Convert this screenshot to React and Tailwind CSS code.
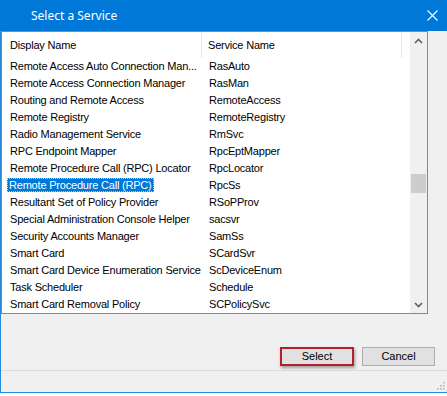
import React from 'react';

const rows = [
  ['Remote Access Auto Connection Man...', 'RasAuto'],
  ['Remote Access Connection Manager', 'RasMan'],
  ['Routing and Remote Access', 'RemoteAccess'],
  ['Remote Registry', 'RemoteRegistry'],
  ['Radio Management Service', 'RmSvc'],
  ['RPC Endpoint Mapper', 'RpcEptMapper'],
  ['Remote Procedure Call (RPC) Locator', 'RpcLocator'],
  ['Remote Procedure Call (RPC)', 'RpcSs'],
  ['Resultant Set of Policy Provider', 'RSoPProv'],
  ['Special Administration Console Helper', 'sacsvr'],
  ['Security Accounts Manager', 'SamSs'],
  ['Smart Card', 'SCardSvr'],
  ['Smart Card Device Enumeration Service', 'ScDeviceEnum'],
  ['Task Scheduler', 'Schedule'],
  ['Smart Card Removal Policy', 'SCPolicySvc'],
];

const SELECTED = 7;

function Chevron({ down }) {
  return (
    <svg width="9" height="6" viewBox="0 0 9 6" className="text-[#606060]">
      <path d={down ? 'M1 1 L4.5 4.5 L8 1' : 'M1 5 L4.5 1.5 L8 5'} fill="none" stroke="currentColor" strokeWidth="1.6" />
    </svg>
  );
}

export default function App() {
  return (
    <div className="w-[447px] h-[396px] bg-white overflow-hidden" style={{ fontFamily: '"Liberation Sans", Arial, sans-serif' }}>
      <div className="w-[447px] h-[393px] bg-[#f0f0f0] border-l border-b border-[#2b8ad8] flex flex-col">
        {/* Title bar */}
        <div className="h-[31px] bg-[#0078d7] flex items-center justify-between text-white shrink-0 -ml-px">
          <span className="pl-[31px] text-[12px]" style={{ fontFamily: '"Noto Sans", "Open Sans", sans-serif' }}>Select a Service</span>
          <svg width="11" height="11" viewBox="0 0 11 11" className="mr-[9px]">
            <path d="M0.5 0.5 L10.5 10.5 M10.5 0.5 L0.5 10.5" stroke="white" strokeWidth="1.1" />
          </svg>
        </div>

        {/* List view */}
        <div className="w-[427px] h-[283px] border border-[#828790] bg-white flex text-[11px] tracking-[-0.2px] text-black shrink-0">
          <div className="flex-1 flex flex-col">
            <div className="h-[26px] flex items-center">
              <div className="w-[200px] h-full pl-[8px] flex items-center border-r border-[#e5e5e5]">Display Name</div>
              <div className="w-[200px] h-full pl-[6px] flex items-center border-r border-[#e5e5e5]">Service Name</div>
            </div>
            {rows.map(([name, svc], i) => (
              <div key={svc} className="h-[17px] flex items-center">
                <div className="w-[200px] pl-[5px] whitespace-nowrap">
                  {i === SELECTED ? (
                    <span className="inline-block bg-[#0078d7] text-white px-[2px] leading-[14px] outline-1 outline-dotted outline-[#f0c070] -outline-offset-1">{name}</span>
                  ) : (
                    <span className="px-[3px]">{name}</span>
                  )}
                </div>
                <div className="pl-[7px] whitespace-nowrap">{svc}</div>
              </div>
            ))}
          </div>
          {/* Scrollbar */}
          <div className="w-[17px] bg-[#f0f0f0] flex flex-col items-center">
            <div className="h-[17px] flex items-center justify-center"><Chevron /></div>
            <div className="h-[125px]" />
            <div className="w-[15px] h-[19px] bg-[#cdcdcd]" />
            <div className="flex-1" />
            <div className="h-[17px] flex items-center justify-center"><Chevron down /></div>
          </div>
        </div>

        {/* Buttons */}
        <div className="flex-1 flex flex-col">
          <div className="flex justify-end gap-[8px] pr-[12px] pt-[33px] text-[11px] text-black">
            <button className="w-[74px] h-[19px] bg-[#e1e1e1] border-2 border-[#b3202a] shadow-[1px_2px_3px_rgba(0,0,0,0.35)] flex items-center justify-center">Select</button>
            <button className="w-[73px] h-[19px] bg-[#e1e1e1] border border-[#adadad] flex items-center justify-center">Cancel</button>
          </div>
          <div className="mt-[4px] h-px bg-[#dcdcdc]" />
          <div className="flex-1 flex justify-end items-end pr-[2px] pb-[2px]">
            <svg width="9" height="9" viewBox="0 0 9 9">
              {[[7, 1], [7, 4], [4, 4], [7, 7], [4, 7], [1, 7]].map(([x, y]) => (
                <rect key={`${x}-${y}`} x={x} y={y} width="1.5" height="1.5" fill="#b0b0b0" />
              ))}
            </svg>
          </div>
        </div>
      </div>
    </div>
  );
}
